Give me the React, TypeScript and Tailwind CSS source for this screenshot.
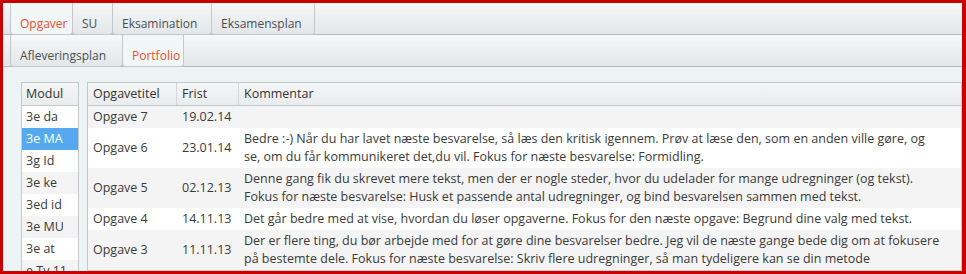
const font = { fontFamily: '"Open Sans", "DejaVu Sans", sans-serif' }

const topTabs = [
  { label: 'Opgaver', w: 'w-[63px]', active: true },
  { label: 'SU', w: 'w-[41px]' },
  { label: 'Eksamination', w: 'w-[100px]' },
  { label: 'Eksamensplan', w: 'w-[104px]' },
]

const subTabs = [
  { label: 'Afleveringsplan', w: 'w-[113px]' },
  { label: 'Portfolio', w: 'w-[62px]', active: true },
]

const modules = ['3e da', '3e MA', '3g Id', '3e ke', '3ed id', '3e MU', '3e at', 'e Tv 11']

const rows: { title: string; date: string; lines: string[] }[] = [
  { title: 'Opgave 7', date: '19.02.14', lines: [] },
  {
    title: 'Opgave 6',
    date: '23.01.14',
    lines: [
      'Bedre :-) Når du har lavet næste besvarelse, så læs den kritisk igennem. Prøv at læse den, som en anden ville gøre, og',
      'se, om du får kommunikeret det,du vil. Fokus for næste besvarelse: Formidling.',
    ],
  },
  {
    title: 'Opgave 5',
    date: '02.12.13',
    lines: [
      'Denne gang fik du skrevet mere tekst, men der er nogle steder, hvor du udelader for mange udregninger (og tekst).',
      'Fokus for næste besvarelse: Husk et passende antal udregninger, og bind besvarelsen sammen med tekst.',
    ],
  },
  {
    title: 'Opgave 4',
    date: '14.11.13',
    lines: ['Det går bedre med at vise, hvordan du løser opgaverne. Fokus for den næste opgave: Begrund dine valg med tekst.'],
  },
  {
    title: 'Opgave 3',
    date: '11.11.13',
    lines: [
      'Der er flere ting, du bør arbejde med for at gøre dine besvarelser bedre. Jeg vil de næste gange bede dig om at fokusere',
      'på bestemte dele. Fokus for næste besvarelse: Skriv flere udregninger, så man tydeligere kan se din metode',
    ],
  },
]

function TabRow({ tabs }: { tabs: { label: string; w: string; active?: boolean }[] }) {
  return (
    <div className="h-[32px] flex pl-[7px] border-b border-[#b3b8ba] bg-gradient-to-b from-[#f8f8f8] via-[#eceff0] to-[#e3e7e9]">
      {tabs.map((t) => (
        <div
          key={t.label}
          className={`${t.w} h-[32px] -mb-px pl-[9px] pt-[12px] leading-[17px] text-[12px] whitespace-nowrap border-x border-b border-[#c4c8ca] rounded-b-[4px] -mr-px ${
            t.active ? 'bg-[#f1f6f7] text-[#e8512e]' : 'text-[#4a4f55]'
          }`}
        >
          {t.label}
        </div>
      ))}
    </div>
  )
}

export default function App() {
  return (
    <div
      style={font}
      className="w-[966px] h-[274px] overflow-hidden border-t-[3px] border-l-[3px] border-r-[4px] border-b-[3px] border-[#c80000] bg-[#edf4f6] text-[12.5px] text-[#3a3a3a]"
    >
      <TabRow tabs={topTabs} />
      <TabRow tabs={subTabs} />
      <div className="flex items-start pl-[18px] pt-[15px] gap-[8px]">
        <div className="w-[58px] border border-[#c3c8ca] bg-white shrink-0">
          <div className="h-[23px] flex items-center pl-[4px] text-[#333] border-b border-[#c3c8ca] bg-gradient-to-b from-[#f5f6f6] to-[#e9eced]">
            Modul
          </div>
          {modules.map((m, i) => (
            <div
              key={m}
              className={`h-[22px] flex items-center pl-[4px] whitespace-nowrap ${
                i === 1 ? 'bg-[#56a9ef] text-white' : i % 2 === 0 ? 'bg-white' : 'bg-[#f4f4f4]'
              }`}
            >
              {m}
            </div>
          ))}
        </div>
        <div className="flex-1 border border-[#c3c8ca] bg-white">
          <div className="h-[23px] flex text-[#333] border-b border-[#c3c8ca] bg-gradient-to-b from-[#f5f6f6] to-[#e9eced]">
            <div className="w-[89px] flex items-center pl-[5px] border-r border-[#d3d7d9]">Opgavetitel</div>
            <div className="w-[62px] flex items-center pl-[5px] border-r border-[#d3d7d9]">Frist</div>
            <div className="flex-1 flex items-center pl-[5px]">Kommentar</div>
          </div>
          {rows.map((r, i) => (
            <div
              key={r.title}
              className={`flex ${r.lines.length > 1 ? 'min-h-[40px]' : 'h-[22px]'} ${i % 2 === 0 ? 'bg-[#f4f4f4]' : 'bg-white'}`}
            >
              <div className="w-[89px] flex items-center pl-[5px]">{r.title}</div>
              <div className="w-[62px] flex items-center pl-[5px]">{r.date}</div>
              <div className="flex-1 flex flex-col justify-center pl-[5px] leading-[18px] whitespace-nowrap">
                {r.lines.map((l) => (
                  <div key={l}>{l}</div>
                ))}
              </div>
            </div>
          ))}
        </div>
      </div>
    </div>
  )
}
